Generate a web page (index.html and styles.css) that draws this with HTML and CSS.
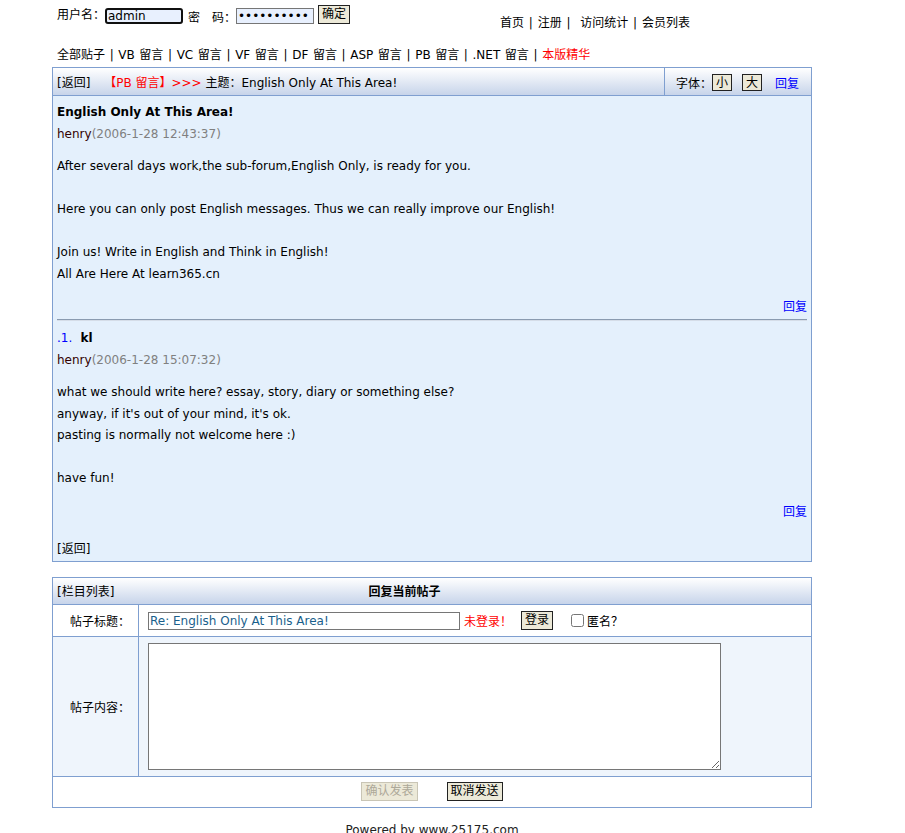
FILE: index.html
```html
<!DOCTYPE html>
<html lang="zh">
  <head>
    <meta charset="UTF-8" />
    <title>English Only At This Area!</title>
    <link rel="stylesheet" href="styles.css">
  </head>
  <body>
    <div class="page">
      <div class="topbar">
        <form class="login">
          用户名：<input class="txt focus" type="text" value="admin" />
          <span class="pwlabel">密　码：</span><input class="txt" type="password" value="1234567890" />
          <button type="button" class="btn">确定</button>
        </form>
        <div class="toplinks">
          <a href="#">首页</a> | <a href="#">注册</a> |&nbsp; <a href="#">访问统计</a> | <a href="#">会员列表</a>
        </div>
      </div>

      <div class="boards">
        <a href="#">全部贴子</a> | <a href="#">VB 留言</a> | <a href="#">VC 留言</a> | <a href="#">VF 留言</a> |
        <a href="#">DF 留言</a> | <a href="#">ASP 留言</a> | <a href="#">PB 留言</a> | <a href="#">.NET 留言</a> |
        <a href="#" class="red">本版精华</a>
      </div>

      <div class="box thread">
        <div class="box-head">
          <div class="head-main">
            <a href="#">[返回]</a>
            <span class="red crumb">【PB 留言】&gt;&gt;&gt;</span> 主题：English Only At This Area!
          </div>
          <div class="head-tools">
            字体：<button type="button" class="btn sm">小</button>
            <button type="button" class="btn sm">大</button>
            <a href="#" class="blue reply-top">回复</a>
          </div>
        </div>
        <div class="box-body">
          <div class="post">
            <div class="post-title">English Only At This Area!</div>
            <div class="post-author">henry<span class="date">(2006-1-28 12:43:37)</span></div>
            <div class="post-text">
              After several days work,the sub-forum,English Only, is ready for you.<br><br>
              Here you can only post English messages. Thus we can really improve our English!<br><br>
              Join us! Write in English and Think in English!<br>
              All Are Here At learn365.cn
            </div>
            <div class="post-reply"><a href="#" class="blue">回复</a></div>
          </div>
          <hr class="sep">
          <div class="post">
            <div class="post-title"><span class="num">.1.</span> kl</div>
            <div class="post-author">henry<span class="date">(2006-1-28 15:07:32)</span></div>
            <div class="post-text">
              what we should write here? essay, story, diary or something else?<br>
              anyway, if it's out of your mind, it's ok.<br>
              pasting is normally not welcome here :)<br><br>
              have fun!
            </div>
            <div class="post-reply"><a href="#" class="blue">回复</a></div>
          </div>
          <div class="back"><a href="#">[返回]</a></div>
        </div>
      </div>

      <div class="box reply">
        <div class="box-head reply-head">
          <a href="#">[栏目列表]</a>
          <b class="reply-caption">回复当前帖子</b>
        </div>
        <div class="row row-white">
          <div class="label">帖子标题：</div>
          <div class="field">
            <input class="txt title-input" type="text" value="Re: English Only At This Area!" />
            <span class="red">未登录！</span>
            <button type="button" class="btn">登录</button>
            <label class="anon"><input type="checkbox" />匿名？</label>
          </div>
        </div>
        <div class="row row-tall">
          <div class="label">帖子内容：</div>
          <div class="field"><textarea class="content"></textarea></div>
        </div>
        <div class="submit-row">
          <button type="button" class="btn" disabled>确认发表</button>
          <button type="button" class="btn">取消发送</button>
        </div>
      </div>

      <div class="footer">Powered by <a href="#">www.25175.com</a></div>
    </div>
  </body>
</html>
```

FILE: styles.css
```css
* {
  box-sizing: border-box;
}

body {
  margin: 0;
  font-family: "DejaVu Sans", "Noto Sans CJK SC", sans-serif;
  font-size: 12px;
  color: #000;
  background-color: #fff;
}

a {
  color: #000;
  text-decoration: none;
}

.red {
  color: #f00;
}

.blue {
  color: #00f;
}

.page {
  width: 760px;
  margin-left: 52px;
}

/* top bar */
.topbar {
  display: grid;
  grid-template-columns: 443px 1fr;
  height: 40px;
  padding-left: 5px;
}

.login {
  margin: 0;
  padding-top: 5px;
  display: flex;
  align-items: flex-start;
  height: 24px;
  white-space: nowrap;
}

.login > .txt,
.pwlabel {
  margin-top: 3px;
}

.pwlabel {
  margin-left: 5px;
}

.txt {
  font: inherit;
  font-size: 12px;
  height: 16px;
  padding: 0 1px;
  border: 1px solid #767676;
  background-color: #e8f0fe;
  color: #000;
}

.login .txt {
  width: 78px;
}

.txt.focus {
  border: 2px solid #101010;
  border-radius: 3px;
}

.btn {
  font: inherit;
  font-size: 12px;
  background-color: #ece9d8;
  border: 1px solid #222;
  padding: 1px 3px;
  height: 19px;
  line-height: 15px;
  color: #000;
}

.btn:disabled {
  color: #aca899;
  border-color: #c9c5b5;
}

.login .btn {
  margin-left: 4px;
  height: 19px;
}

.toplinks {
  padding-top: 13px;
  white-space: nowrap;
  word-spacing: 1px;
}

.boards {
  padding-left: 5px;
  line-height: 14px;
  margin-top: 8px;
  margin-bottom: 5px;
  white-space: nowrap;
  word-spacing: 0.8px;
}

/* boxes */
.box {
  border: 1px solid #7f9fd0;
}

.box-head {
  display: flex;
  align-items: center;
  background: linear-gradient(#ffffff, #c7d4ea);
  border-bottom: 1px solid #7f9fd0;
  height: 28px;
}

.head-main {
  flex: 1;
  padding-left: 4px;
  white-space: nowrap;
}

.crumb {
  margin-left: 10px;
}

.head-tools {
  width: 147px;
  height: 100%;
  border-left: 1px solid #7f9fd0;
  display: flex;
  align-items: center;
  padding-left: 11px;
  padding-top: 2px;
  white-space: nowrap;
}

.btn.sm {
  height: 17px;
  padding: 0 3px;
  line-height: 14px;
  margin-right: 10px;
}

.reply-top {
  margin-left: 3px;
}

.box-body {
  background-color: #e4f0fc;
  padding: 5px 4px 1px 4px;
}

.post-title {
  font-weight: bold;
  line-height: 22px;
}

.num {
  color: #00f;
  font-weight: normal;
  margin-right: 4px;
}

.post-author {
  color: #300;
  line-height: 22px;
}

.date {
  color: #808080;
}

.post-text {
  margin-top: 11px;
  line-height: 21.5px;
}

.post-reply {
  text-align: right;
  line-height: 22px;
  margin-top: 11px;
}

.sep {
  margin: 1px 0 6px 0;
  border: 0;
  border-top: 1px solid #8a9bb0;
  border-bottom: 1px solid #d5dde8;
  height: 0;
}

.back {
  margin-top: 15px;
  line-height: 22px;
}

/* reply form */
.reply {
  margin-top: 15px;
}

.reply-head {
  height: 27px;
  padding-left: 4px;
}

.reply-caption {
  margin-left: 254px;
}

.row {
  display: grid;
  grid-template-columns: 86px 1fr;
  border-bottom: 1px solid #7f9fd0;
}

.row-white {
  height: 32px;
  background-color: #fff;
}

.row-tall {
  height: 140px;
  background-color: #eff5fc;
}

.label {
  display: flex;
  align-items: center;
  justify-content: flex-end;
  padding-right: 8px;
  border-right: 1px solid #7f9fd0;
}

.field {
  display: flex;
  align-items: center;
  padding-left: 9px;
  white-space: nowrap;
}

.title-input {
  width: 312px;
  height: 18px;
  margin-top: 2px;
  background-color: #fff;
  color: #1a5f8c;
  margin-right: 4px;
}

.field .btn {
  margin-left: 9px;
}

.anon {
  margin-left: 18px;
  display: flex;
  align-items: center;
}

.anon input {
  margin: 0 3px 0 0;
  width: 13px;
  height: 13px;
}

.content {
  width: 573px;
  height: 127px;
  border: 1px solid #767676;
  background-color: #fff;
  margin-top: 0;
}

.submit-row {
  display: flex;
  justify-content: center;
  align-items: center;
  gap: 29px;
  height: 30px;
}

.footer {
  text-align: center;
  margin-top: 15px;
  color: #222;
}

.footer a {
  color: #222;
}
```
